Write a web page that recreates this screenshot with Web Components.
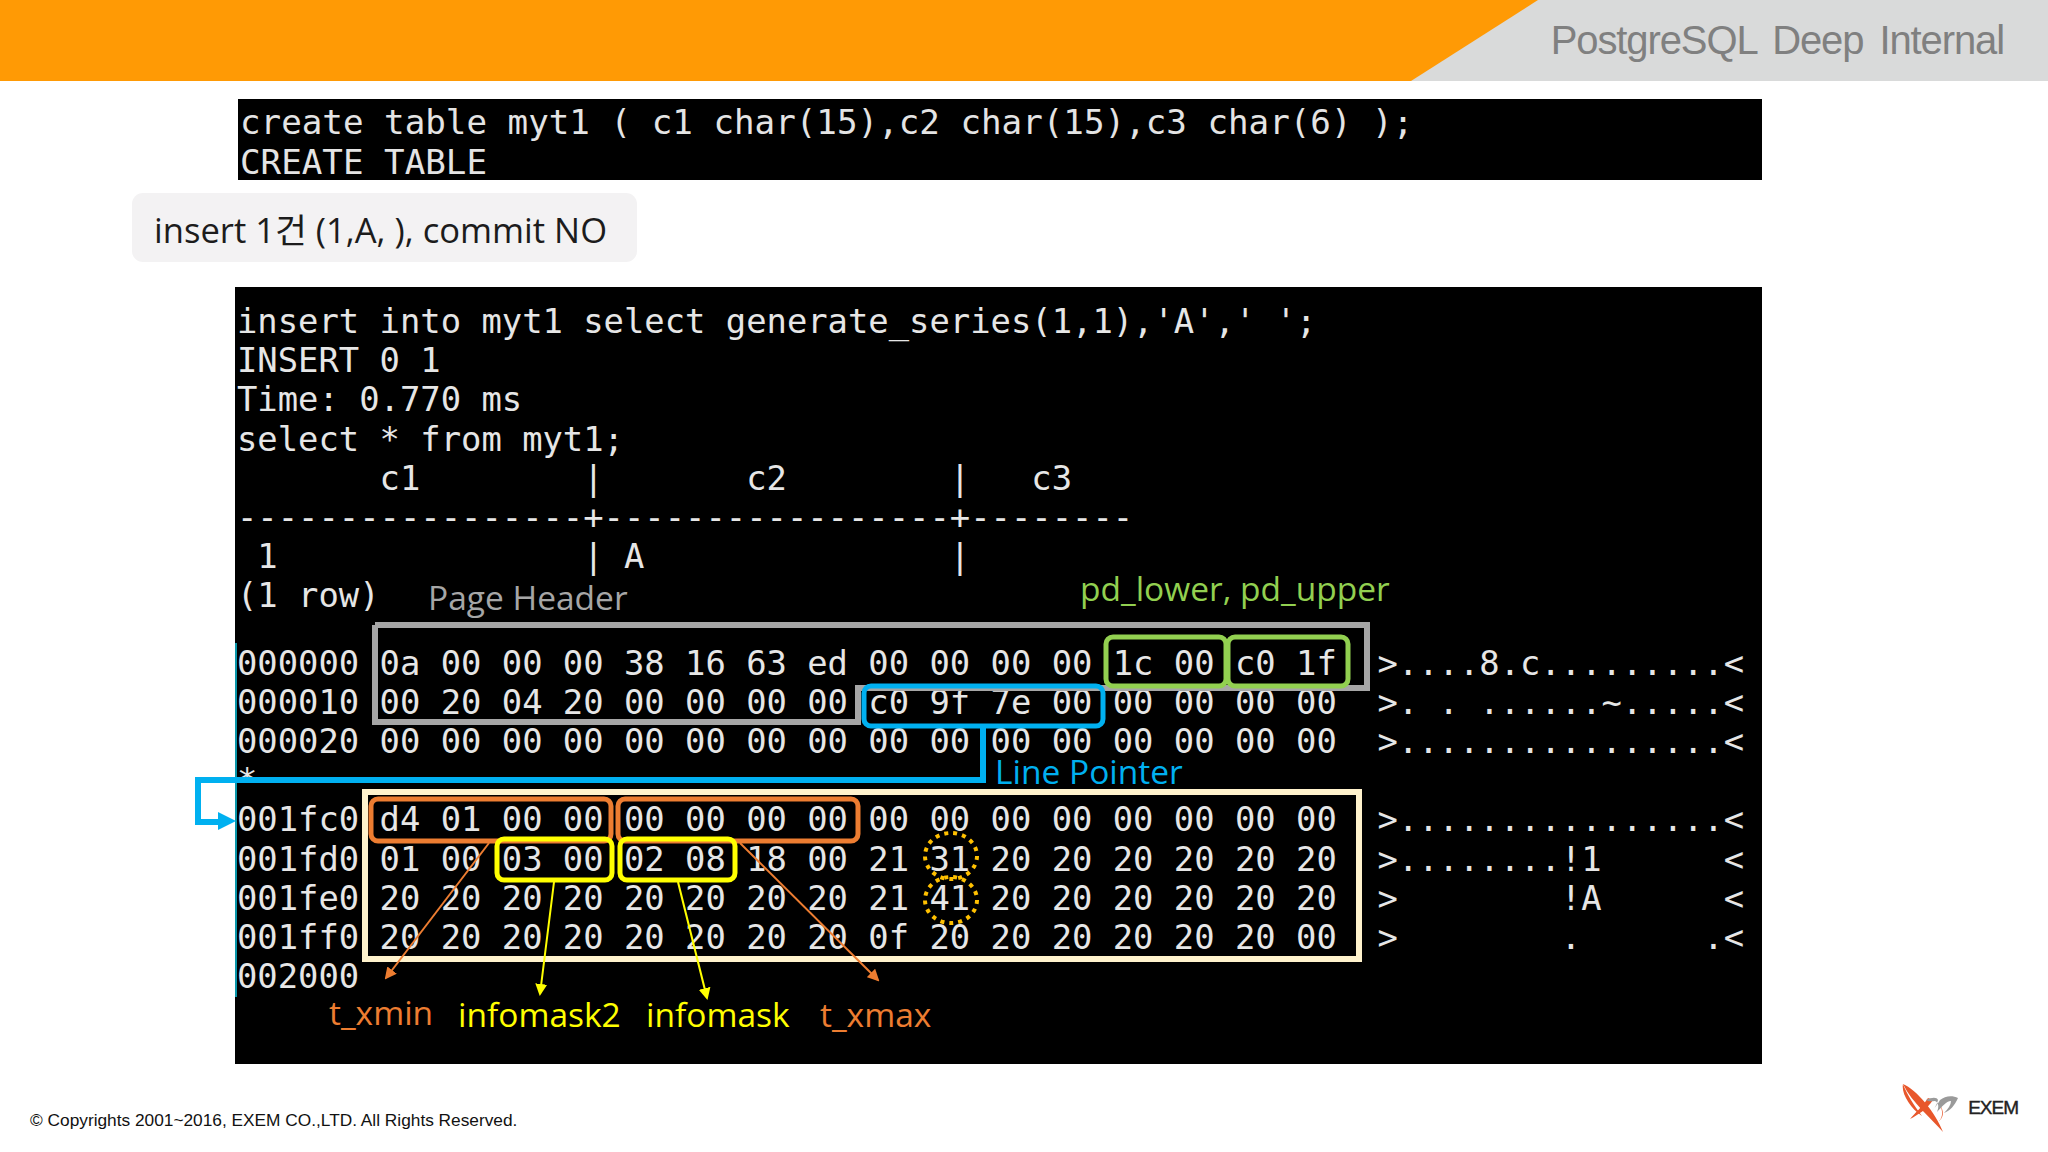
<!DOCTYPE html>
<html>
<head>
<meta charset="utf-8">
<title>PostgreSQL Deep Internal</title>
<style>
  html, body { margin: 0; background: #fff; }
</style>
</head>
<body>
<slide-page>
  <slide-header slot="header">PostgreSQL Deep Internal</slide-header>

  <term-box style="margin: 18px 0 0 238px; width: 1524px; height: 81px; --pad: 3px 0 0 2px;">
    <term-text style="--cell: 34.2px; --row: 40px; color: #e4e4e4;">create table myt1 ( c1 char(15),c2 char(15),c3 char(6) );
CREATE TABLE</term-text>
  </term-box>

  <note-pill style="margin: 13px 0 0 132px;">insert 1건 (1,A, ), commit NO</note-pill>

  <term-box style="margin: 25px 0 0 235px; width: 1527px; height: 777px; --pad: 15px 0 0 2px;">
    <term-text>insert into myt1 select generate_series(1,1),'A',' ';
INSERT 0 1
Time: 0.770 ms
select * from myt1;
       c1        |       c2        |   c3
-----------------+-----------------+--------
 1               | A               |
(1 row)</term-text>
    <term-text style="margin-top: 28px;">000000 0a 00 00 00 38 16 63 ed 00 00 00 00 1c 00 c0 1f  &gt;....8.c.........&lt;
000010 00 20 04 20 00 00 00 00 c0 9f 7e 00 00 00 00 00  &gt;. . ......~.....&lt;
000020 00 00 00 00 00 00 00 00 00 00 00 00 00 00 00 00  &gt;................&lt;
*
001fc0 d4 01 00 00 00 00 00 00 00 00 00 00 00 00 00 00  &gt;................&lt;
001fd0 01 00 03 00 02 08 18 00 21 31 20 20 20 20 20 20  &gt;........!1      &lt;
001fe0 20 20 20 20 20 20 20 20 21 41 20 20 20 20 20 20  &gt;        !A      &lt;
001ff0 20 20 20 20 20 20 20 20 0f 20 20 20 20 20 20 00  &gt;        .      .&lt;
002000</term-text>
    <hex-marks slot="over"></hex-marks>
    <term-label slot="over" style="--x: 193px; --y: 290px; --c: #a6a6a6;">Page Header</term-label>
    <term-label slot="over" style="--x: 845px; --y: 281px; --c: #92d050;">pd_lower, pd_upper</term-label>
    <term-label slot="over" style="--x: 760px; --y: 464px; --c: #00b0f0;">Line Pointer</term-label>
    <term-label slot="over" style="--x: 94px; --y: 705px; --c: #ed7d31;">t_xmin</term-label>
    <term-label slot="over" style="--x: 223px; --y: 707px; --c: #ffff00;">infomask2</term-label>
    <term-label slot="over" style="--x: 411px; --y: 707px; --c: #ffff00;">infomask</term-label>
    <term-label slot="over" style="--x: 585px; --y: 707px; --c: #ed7d31;">t_xmax</term-label>
  </term-box>

  <slide-footer slot="footer">© Copyrights 2001~2016, EXEM CO.,LTD. All Rights Reserved.</slide-footer>
</slide-page>

<script>
class SlidePage extends HTMLElement {
  constructor() {
    super();
    this.attachShadow({ mode: "open" }).innerHTML = `
      <style>
        :host { display: flex; flex-direction: column; width: 2048px; height: 1152px; overflow: hidden; background: #fff; }
        main { flex: 1; display: flex; flex-direction: column; align-items: flex-start; }
      </style>
      <slot name="header"></slot>
      <main><slot></slot></main>
      <slot name="footer"></slot>`;
  }
}

class SlideHeader extends HTMLElement {
  constructor() {
    super();
    this.attachShadow({ mode: "open" }).innerHTML = `
      <style>
        :host { display: flex; justify-content: flex-end; height: 81px; background: #ff9a05; }
        .tab {
          width: 637px; display: flex; align-items: center; justify-content: flex-end;
          padding-right: 44px; box-sizing: border-box;
          background: #d9dada;
          clip-path: polygon(127px 0, 100% 0, 100% 100%, 0 100%);
          font: 40px "Liberation Sans", sans-serif; letter-spacing: -1.1px; word-spacing: 6px; color: #808080;
        }
      </style>
      <div class="tab"><slot></slot></div>`;
  }
}

class TermBox extends HTMLElement {
  constructor() {
    super();
    this.attachShadow({ mode: "open" }).innerHTML = `
      <style>
        :host { display: block; position: relative; background: #000; box-sizing: border-box; padding: var(--pad, 0); }
      </style>
      <slot></slot>
      <slot name="over"></slot>`;
  }
}

class TermText extends HTMLElement {
  constructor() {
    super();
    this.attachShadow({ mode: "open" }).innerHTML = `
      <style>
        :host {
          display: block; color: #e6e6e6;
          font-family: "DejaVu Sans Mono", monospace;
          font-size: var(--cell, 33.85px); line-height: var(--row, 39.2px);
        }
        slot { white-space: pre; }
      </style>
      <slot></slot>`;
  }
}

class TermLabel extends HTMLElement {
  constructor() {
    super();
    this.attachShadow({ mode: "open" }).innerHTML = `
      <style>
        :host {
          position: absolute; left: var(--x); top: var(--y); color: var(--c);
          font: 33.5px/40px "Open Sans", sans-serif; white-space: nowrap;
        }
      </style>
      <slot></slot>`;
  }
}

class NotePill extends HTMLElement {
  constructor() {
    super();
    this.attachShadow({ mode: "open" }).innerHTML = `
      <style>
        :host {
          display: flex; align-items: center; width: 505px; height: 69px; box-sizing: border-box;
          padding-left: 22px; border-radius: 11px; background: #f3f2f3; color: #1c1c1c;
          font: 34.6px "Open Sans", "Noto Sans CJK KR", sans-serif;
        }
      </style>
      <slot></slot>`;
  }
}

// boxes, arrows and the jump line, drawn in page coordinates
class HexMarks extends HTMLElement {
  constructor() {
    super();
    this.attachShadow({ mode: "open" }).innerHTML = `
      <style>
        :host { position: absolute; left: -235px; top: -287px; width: 2048px; height: 1152px; pointer-events: none; }
        svg { display: block; }
        rect, polyline, ellipse, line { fill: none; }
      </style>
      <svg width="2048" height="1152" viewBox="0 0 2048 1152">
        <defs>
          <marker id="ao" markerWidth="6" markerHeight="6" refX="5" refY="3" orient="auto"><path d="M0 0L6 3L0 6z" fill="#ed7d31"/></marker>
          <marker id="ay" markerWidth="6" markerHeight="6" refX="5" refY="3" orient="auto"><path d="M0 0L6 3L0 6z" fill="#ffff00"/></marker>
        </defs>
        <line x1="236" y1="643" x2="236" y2="997" stroke="#0a96aa" stroke-width="2"/>

        <polyline points="375,625 1367,625 1367,688 858,688 858,722 375,722 375,625" stroke="#a6a6a6" stroke-width="6"/>
        <rect x="1106" y="637" width="120" height="49" rx="7" stroke="#92d050" stroke-width="5"/>
        <rect x="1228" y="637" width="120" height="49" rx="7" stroke="#92d050" stroke-width="5"/>

        <polyline points="983,726 983,780 198,780 198,822 220,822" stroke="#00b0f0" stroke-width="6"/>
        <path d="M218 812L236 821L218 830z" fill="#00b0f0"/>
        <rect x="864" y="686" width="239" height="40" rx="7" stroke="#00b0f0" stroke-width="5"/>

        <rect x="365" y="792" width="994" height="167" stroke="#fff2cc" stroke-width="6"/>
        <rect x="371" y="799" width="240" height="42" rx="7" stroke="#ed7d31" stroke-width="5"/>
        <rect x="618" y="799" width="240" height="42" rx="7" stroke="#ed7d31" stroke-width="5"/>
        <rect x="497" y="839" width="115" height="41" rx="7" stroke="#ffff00" stroke-width="5"/>
        <rect x="620" y="839" width="115" height="41" rx="7" stroke="#ffff00" stroke-width="5"/>

        <ellipse cx="951" cy="856" rx="26" ry="23" stroke="#ffc000" stroke-width="4" stroke-dasharray="4 5"/>
        <ellipse cx="951" cy="900" rx="26" ry="23" stroke="#ffc000" stroke-width="4" stroke-dasharray="4 5"/>

        <line x1="489" y1="843" x2="386" y2="978" stroke="#ed7d31" stroke-width="2" marker-end="url(#ao)"/>
        <line x1="740" y1="843" x2="878" y2="980" stroke="#ed7d31" stroke-width="2" marker-end="url(#ao)"/>
        <line x1="554" y1="882" x2="540" y2="994" stroke="#ffff00" stroke-width="2" marker-end="url(#ay)"/>
        <line x1="678" y1="882" x2="707" y2="998" stroke="#ffff00" stroke-width="2" marker-end="url(#ay)"/>
      </svg>`;
  }
}

class SlideFooter extends HTMLElement {
  constructor() {
    super();
    this.attachShadow({ mode: "open" }).innerHTML = `
      <style>
        :host {
          display: flex; align-items: center; justify-content: space-between; height: 88px;
          padding: 0 30px; box-sizing: border-box;
          font: 17.3px "Liberation Sans", sans-serif; color: #111;
        }
        .copy { padding-top: 24px; }
        .brand { display: flex; align-items: center; gap: 8px; }
        .name { font-size: 19px; letter-spacing: -1px; color: #222; -webkit-text-stroke: .4px #222; }
      </style>
      <div class="copy"><slot></slot></div>
      <div class="brand">
        <svg width="58" height="50" viewBox="0 0 58 50">
          <path d="M1 1C14 6 34 30 41 49C30 36 10 20 1 1z" fill="#e8572b"/>
          <path d="M1 1C-1 10 8 25 20 33C12 22 5 12 1 1z" fill="#e8572b"/>
          <path d="M26 15C20 24 13 30 8 36C16 32 25 26 31 17z" fill="#e8572b"/>
          <path d="M37 38C41 34 41 28 38 22C42 28 42 34 37 38z" fill="#e8572b"/>
          <path d="M24 17C30 14 35 14 36 17C35 22 32 26 28 30C31 27 36 21 38 17C43 13 50 12 56 15C53 22 48 28 42 30C46 26 49 22 49 18C44 18 40 24 35 29C37 24 37 20 33 18C30 18 27 19 24 17z" fill="#9a9a9a"/>
        </svg>
        <span class="name">EXEM</span>
      </div>`;
  }
}

customElements.define("slide-page", SlidePage);
customElements.define("slide-header", SlideHeader);
customElements.define("term-box", TermBox);
customElements.define("term-text", TermText);
customElements.define("term-label", TermLabel);
customElements.define("note-pill", NotePill);
customElements.define("hex-marks", HexMarks);
customElements.define("slide-footer", SlideFooter);
</script>
</body>
</html>
